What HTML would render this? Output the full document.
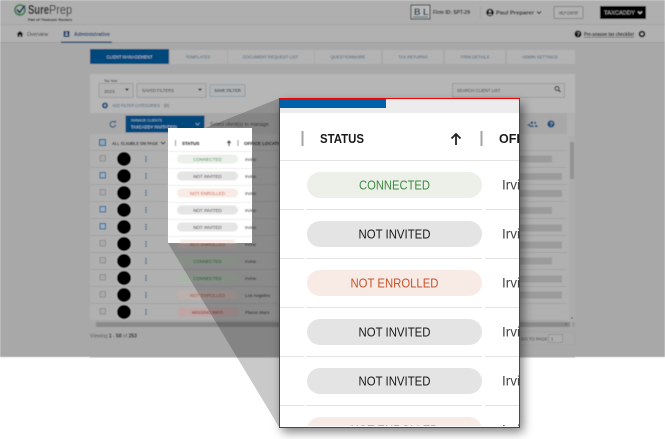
<!DOCTYPE html>
<html><head><meta charset="utf-8"><title>SurePrep</title>
<style>
html,body{margin:0;padding:0;background:#fff;width:665px;height:439px;overflow:hidden}
svg{display:block;font-family:"Liberation Sans",sans-serif}
</style></head><body>
<svg width="665" height="439" viewBox="0 0 665 439" xmlns="http://www.w3.org/2000/svg">
<defs>
<filter id="b" x="-2%" y="-2%" width="104%" height="104%"><feGaussianBlur stdDeviation="0.45"/></filter>
<filter id="s" x="-10%" y="-10%" width="125%" height="120%"><feGaussianBlur stdDeviation="5"/></filter>
<clipPath id="m"><rect x="280" y="99" width="239" height="327"/></clipPath>
</defs>
<rect width="665" height="439" fill="#fff"/>
<g filter="url(#b)">
<rect width="665" height="357" fill="#a8a8a8"/>
<rect width="665" height="24" fill="#afafaf"/>
<rect y="24" width="665" height="1" fill="#a2a2a2"/>
<rect y="25" width="665" height="17" fill="#b1b1b1"/>
<rect y="42" width="665" height="1" fill="#9c9c9c"/>
<!-- logo -->
<circle cx="20" cy="10" r="5" fill="none" stroke="#3d7a52" stroke-width="1.800"/>
<path d="M17 9.500l2.500 3L25 5.500" fill="none" stroke="#123f5a" stroke-width="1.800"/>
<text x="28" y="14" font-size="12.500" font-weight="700" fill="#111" textLength="21" lengthAdjust="spacingAndGlyphs">Sure</text>
<text x="49" y="14" font-size="12.500" fill="#333" textLength="23" lengthAdjust="spacingAndGlyphs">Prep</text>
<text x="28" y="21" font-size="4" font-weight="700" fill="#111" textLength="44" lengthAdjust="spacingAndGlyphs">Part of Thomson Reuters</text>
<!-- right header -->
<rect x="411" y="5" width="19" height="14" fill="#b9b9b9" stroke="#333"/>
<text x="414" y="15" font-size="9" font-weight="700" fill="#123f4f">B</text>
<text x="423" y="15" font-size="9" font-weight="700" fill="#123f4f">L</text>
<rect x="413" y="16.500" width="15" height="1" fill="#3a6a6a"/>
<text x="433" y="14" font-size="5.500" font-weight="700" fill="#222" textLength="37" lengthAdjust="spacingAndGlyphs">Firm ID: SPT-29</text>
<rect x="480" y="6" width="1" height="13" fill="#a4a4a4"/>
<circle cx="490" cy="12.500" r="3.800" fill="#111"/>
<circle cx="490" cy="11.300" r="1.300" fill="#aaa"/>
<path d="M487.800 15a2.300 2 0 0 1 4.400 0z" fill="#aaa"/>
<text x="496" y="14.500" font-size="5.500" font-weight="700" fill="#222" textLength="38" lengthAdjust="spacingAndGlyphs">Paul Preparer</text>
<path d="M537 11.500l2 2 2-2" fill="none" stroke="#222" stroke-width="1"/>
<rect x="554" y="6.500" width="29" height="12" rx="1" fill="#b1b1b1" stroke="#858585"/>
<text x="559" y="14.300" font-size="4.500" fill="#222" textLength="19" lengthAdjust="spacingAndGlyphs">HELP CENTER</text>
<rect x="600" y="6" width="46" height="13" fill="#000"/>
<text x="604" y="14.500" font-size="5" fill="#aaa" textLength="31" lengthAdjust="spacingAndGlyphs">TAXCADDY</text>
<path d="M638 11.500l2 2 2-2" fill="none" stroke="#ccc" stroke-width="1"/>
<!-- nav -->
<path d="M16.500 34l3.500-3 3.500 3h-1v3h-1.800v-2h-1.400v2h-1.800v-3z" fill="#111"/>
<text x="27" y="36" font-size="5.500" fill="#333" textLength="21" lengthAdjust="spacingAndGlyphs">Overview</text>
<rect x="63.500" y="31" width="6" height="6" rx=".8" fill="#15406a"/>
<circle cx="66.500" cy="33" r="1" fill="#b3b3b3"/>
<rect x="65" y="34.500" width="3" height="1" fill="#b3b3b3"/>
<text x="74" y="36" font-size="5.500" font-weight="700" fill="#15406a" textLength="36" lengthAdjust="spacingAndGlyphs">Administrative</text>
<rect x="61" y="41.500" width="51" height="1.500" fill="#1c4a72"/>
<circle cx="578" cy="34" r="3.500" fill="#111"/>
<text x="576.800" y="36" font-size="5" font-weight="700" fill="#aaa">?</text>
<text x="584" y="36" font-size="5" font-weight="700" fill="#222" text-decoration="underline" textLength="50" lengthAdjust="spacingAndGlyphs">Pre-season tax checklist</text>
<circle cx="642" cy="34" r="2.400" fill="none" stroke="#111" stroke-width="1.800"/>
<!-- tabs -->
<rect x="90" y="49" width="79" height="15" fill="#04467c"/>
<rect x="170" y="50" width="57" height="14" fill="#b3b3b3"/>
<rect x="228" y="50" width="86" height="14" fill="#b3b3b3"/>
<rect x="315" y="50" width="66" height="14" fill="#b3b3b3"/>
<rect x="383" y="50" width="60" height="14" fill="#b3b3b3"/>
<rect x="445" y="50" width="60" height="14" fill="#b3b3b3"/>
<rect x="507" y="50" width="68" height="14" fill="#b3b3b3"/>
<g font-size="4.200" text-anchor="middle" fill="#3f607c">
<text x="129.500" y="58.500" fill="#c5ced6">CLIENT MANAGEMENT</text>
<text x="198" y="58.500">TEMPLATES</text>
<text x="270.500" y="58.500">DOCUMENT REQUEST LIST</text>
<text x="348" y="58.500">QUESTIONNAIRE</text>
<text x="413" y="58.500">TAX RETURNS</text>
<text x="475" y="58.500">FIRM DETAILS</text>
<text x="540" y="58.500">ADMIN SETTINGS</text>
</g>
<!-- panel -->
<rect x="90" y="74" width="485" height="283" fill="#b0b0b0"/>
<rect x="90" y="74" width="485" height="39" fill="#b6b6b6"/>
<rect x="99" y="83.500" width="34" height="14" rx="1" fill="#b3b3b3" stroke="#9c9c9c"/>
<text x="104" y="82" font-size="3.500" fill="#222">Tax Year</text>
<text x="104" y="93" font-size="4.800" fill="#333">2023</text>
<path d="M125 88.500h4l-2 2.500z" fill="#222"/>
<rect x="137" y="83.500" width="69" height="14" rx="1" fill="#b3b3b3" stroke="#9c9c9c"/>
<text x="142" y="92" font-size="4.200" fill="#333">SAVED FILTERS</text>
<path d="M198 88.500h4l-2 2.500z" fill="#333"/>
<rect x="210" y="84.500" width="35" height="12" rx="1" fill="#b3b3b3" stroke="#8fa0ad"/>
<text x="227.500" y="92" font-size="4.200" font-weight="700" text-anchor="middle" fill="#25496a">SAVE FILTER</text>
<circle cx="105" cy="105.500" r="3" fill="#15487a"/>
<path d="M103.500 105.500h3M105 104v3" stroke="#b8b8b8" stroke-width=".8"/>
<text x="112" y="107" font-size="4.300" fill="#3f607c" textLength="48" lengthAdjust="spacingAndGlyphs">ADD FILTER CATEGORIES</text>
<text x="164" y="107" font-size="4.300" fill="#444">(0)</text>
<rect x="452.500" y="83.500" width="112" height="14" rx="1" fill="#b3b3b3" stroke="#9c9c9c"/>
<text x="457" y="92" font-size="4.200" fill="#333">SEARCH CLIENT LIST</text>
<circle cx="557" cy="88.500" r="2" fill="none" stroke="#222" stroke-width="1"/>
<path d="M558.500 90l2 2" stroke="#222" stroke-width="1.200"/>
<!-- toolbar -->
<rect x="90" y="113" width="477" height="21" fill="#a8a8a8"/>
<path d="M115 122.500a2.800 2.800 0 1 0 .6 2.200" fill="none" stroke="#164a78" stroke-width="1"/>
<path d="M113.500 122.500h2.500v-2.300z" fill="#164a78"/>
<rect x="125.500" y="115.500" width="79" height="17" fill="#04467c"/>
<text x="131" y="121.500" font-size="3.500" fill="#b8c6d2">MANAGE CLIENTS</text>
<text x="131" y="128.500" font-size="4.400" fill="#d0d8de" textLength="46" lengthAdjust="spacingAndGlyphs">TAXCADDY INVITATION</text>
<path d="M195.500 123l2 2 2-2" stroke="#8fa5b8" fill="none" stroke-width=".8"/>
<text x="210" y="126" font-size="5" fill="#333" textLength="60" lengthAdjust="spacingAndGlyphs">Select client(s) to manage.</text>
<path d="M527 125l3-1.500v3zM530.500 122.800a1.300 1.300 0 1 1 2.600 0 1.300 1.300 0 1 1-2.600 0M529.500 127c.8-2.400 4-2.400 4.800 0zM534 122.800a1.100 1.100 0 1 1 2.200 0 1.100 1.100 0 1 1-2.200 0M535 127h3c-.3-1.800-1.800-2.200-3-1.900z" fill="#144a78"/>
<circle cx="551" cy="124" r="3.600" fill="#144a78"/>
<text x="549.600" y="126" font-size="5.500" font-weight="700" fill="#b0b8bf">?</text>
<!-- table header -->
<rect x="99.500" y="139.500" width="6" height="6" fill="#8fa7ba" stroke="#235a88" stroke-width="1"/>
<text x="112" y="145" font-size="4.800" font-weight="700" fill="#222" textLength="46" lengthAdjust="spacingAndGlyphs">ALL ELIGIBLE ON PAGE</text>
<path d="M161 142l2 2 2-2" stroke="#222" fill="none" stroke-width=".9"/>
<!-- rows -->
<g stroke="#a2a2a2" stroke-width="1">
<path d="M90 150.500h477M90 167.500h477M90 184.500h477M90 201.500h477M90 218.500h477M90 235.500h477M90 252.500h477M90 269.500h477M90 286.500h477M90 303.500h477M90 320.500h477"/>
</g>
<g fill="#aaaaaa" stroke="#8e8e8e">
<rect x="100" y="155.500" width="5.500" height="5.500"/><rect x="100" y="189.500" width="5.500" height="5.500"/>
<rect x="100" y="240.500" width="5.500" height="5.500"/><rect x="100" y="257.500" width="5.500" height="5.500"/>
<rect x="100" y="274.500" width="5.500" height="5.500"/><rect x="100" y="291.500" width="5.500" height="5.500"/>
<rect x="100" y="308.500" width="5.500" height="5.500"/>
</g>
<g fill="#9cb0c0" stroke="#2d6594">
<rect x="100" y="172.500" width="5.500" height="5.500"/><rect x="100" y="206.500" width="5.500" height="5.500"/><rect x="100" y="223.500" width="5.500" height="5.500"/>
</g>
<g fill="#000" stroke="#c8c8c8" stroke-width=".8">
<circle cx="124" cy="159" r="7.500"/><circle cx="124" cy="176" r="7.500"/><circle cx="124" cy="193" r="7.500"/>
<circle cx="124" cy="210" r="7.500"/><circle cx="124" cy="227" r="7.500"/><circle cx="124" cy="244" r="7.500"/>
<circle cx="124" cy="261" r="7.500"/><circle cx="124" cy="278" r="7.500"/><circle cx="124" cy="295" r="7.500"/>
<circle cx="124" cy="312" r="7.500"/>
</g>
<g stroke="#1f5a8c" stroke-width="1.400" stroke-dasharray="1.300 .9">
<path d="M146 156v6M146 173v6M146 190v6M146 207v6M146 224v6M146 241v6M146 258v6M146 275v6M146 292v6M146 309v6"/>
</g>
<!-- dim pills -->
<rect x="177" y="239.500" width="61" height="9" rx="4.500" fill="#bcb0ac"/>
<text x="207.500" y="246" font-size="4.500" text-anchor="middle" fill="#9c4828">NOT ENROLLED</text>
<rect x="177" y="256.500" width="61" height="9" rx="4.500" fill="#aab5aa"/>
<text x="207.500" y="263" font-size="4.500" text-anchor="middle" fill="#2e6a30">CONNECTED</text>
<rect x="177" y="273.500" width="61" height="9" rx="4.500" fill="#aab5aa"/>
<text x="207.500" y="280" font-size="4.500" text-anchor="middle" fill="#2e6a30">CONNECTED</text>
<rect x="177" y="290.500" width="61" height="9" rx="4.500" fill="#bcb0ac"/>
<text x="207.500" y="297" font-size="4.500" text-anchor="middle" fill="#9c4828">NOT ENROLLED</text>
<rect x="177" y="307.500" width="61" height="9" rx="4.500" fill="#bfa5a5"/>
<text x="207.500" y="314" font-size="4.500" text-anchor="middle" fill="#7e2c2c">MISSING INFO</text>
<g font-size="4.600" fill="#222">
<text x="245" y="246">Irvine</text><text x="245" y="263">Irvine</text><text x="245" y="280">Irvine</text>
<text x="245" y="297">Los Angeles</text><text x="245" y="314">Planet Mars</text>
</g>
<!-- right blocks -->
<g fill="#9b9b9b">
<rect x="515" y="155.500" width="37" height="7"/><rect x="515" y="173" width="47" height="7"/><rect x="515" y="190" width="47" height="7"/>
<rect x="515" y="207" width="37" height="7"/><rect x="515" y="224.500" width="47" height="7"/><rect x="515" y="241.500" width="47" height="7"/>
<rect x="515" y="257.500" width="37" height="7"/><rect x="515" y="275.500" width="47" height="7"/><rect x="515" y="291.500" width="47" height="7"/>
</g>
<!-- scrollbars -->
<rect x="569" y="136" width="6" height="186" fill="#acacac"/>
<rect x="570" y="142" width="4" height="37" fill="#929292"/>
<circle cx="572" cy="318" r=".8" fill="#555"/>
<rect x="90" y="321.500" width="485" height="6" fill="#a8a8a8"/>
<rect x="96" y="322" width="474" height="5" fill="#8a8a8a"/>
<circle cx="566" cy="324" r=".8" fill="#555"/>
<rect x="572" y="322" width="3" height="5" fill="#9a9a9a"/>
<rect x="90" y="327.500" width="485" height="30" fill="#a8a8a8"/>
<text x="90" y="337.500" font-size="5" fill="#555">Viewing <tspan font-weight="700" fill="#111">1</tspan> - <tspan font-weight="700" fill="#111">50</tspan> of <tspan font-weight="700" fill="#111">253</tspan></text>
<rect x="520" y="332" width="55" height="13" fill="#a9a9a9" stroke="#a2a2a2"/>
<text x="521" y="340.500" font-size="4.300" fill="#333">GO TO PAGE</text>
<rect x="548.500" y="334.500" width="14" height="8" rx="1" fill="#adadad" stroke="#959595"/>
<text x="551" y="340.500" font-size="4.300" fill="#333">1</text>
</g>
<!-- wedge -->
<path d="M205 128L280 98V427H279L168 243V128z" fill="#000" fill-opacity=".21"/>
<!-- white source box -->
<rect x="168" y="128" width="84" height="115" fill="#fff"/>
<g filter="url(#b)">
<rect x="175" y="140" width="1" height="6" fill="#999"/>
<rect x="237.500" y="140" width="1" height="6" fill="#999"/>
<text x="182" y="145" font-size="4.500" font-weight="700" fill="#111">STATUS</text>
<path d="M229 146v-5M227.300 143l1.700-2 1.700 2" stroke="#222" fill="none" stroke-width=".8"/>
<text x="244" y="145" font-size="4.600" font-weight="700" fill="#222">OFFICE LOCATION</text>
<path d="M168 151.500h84M168 168.500h84M168 185.500h84M168 202.500h84M168 219.500h84M168 236.500h84" stroke="#e6e6e6" stroke-width=".8"/>
<rect x="177" y="154.500" width="61" height="9" rx="4.500" fill="#ecf0ea"/>
<text x="207.500" y="161" font-size="4.500" text-anchor="middle" fill="#3e8a40">CONNECTED</text>
<rect x="177" y="171.500" width="61" height="9" rx="4.500" fill="#e5e5e5"/>
<text x="207.500" y="178" font-size="4.500" text-anchor="middle" fill="#222">NOT INVITED</text>
<rect x="177" y="188.500" width="61" height="9" rx="4.500" fill="#f8ebe6"/>
<text x="207.500" y="195" font-size="4.500" text-anchor="middle" fill="#c8502a">NOT ENROLLED</text>
<rect x="177" y="205.500" width="61" height="9" rx="4.500" fill="#e5e5e5"/>
<text x="207.500" y="212" font-size="4.500" text-anchor="middle" fill="#222">NOT INVITED</text>
<rect x="177" y="222.500" width="61" height="9" rx="4.500" fill="#e5e5e5"/>
<text x="207.500" y="229" font-size="4.500" text-anchor="middle" fill="#222">NOT INVITED</text>
<path d="M181 239.500h53l1.500 3.500h-56z" fill="#f8ebe6"/>
<g font-size="4.600" fill="#333">
<text x="245" y="161">Irvine</text><text x="245" y="178">Irvine</text><text x="245" y="195">Irvine</text><text x="245" y="212">Irvine</text><text x="245" y="229">Irvine</text>
</g>
</g>
<!-- magnifier -->
<rect x="282" y="103" width="241" height="329" fill="#000" fill-opacity=".5" filter="url(#s)"/>
<rect x="279.500" y="98.500" width="240" height="329" fill="#fff"/>
<g clip-path="url(#m)">
<rect x="280" y="99" width="240" height="14" fill="#ececec"/>
<rect x="280" y="99" width="106" height="9" fill="#0060a8"/>
<rect x="301.500" y="131" width="2" height="15" fill="#a6a6a6"/>
<rect x="480.500" y="131" width="2" height="15" fill="#a6a6a6"/>
<text x="320" y="143" font-size="12.500" font-weight="700" fill="#1a1a1a" textLength="44" lengthAdjust="spacingAndGlyphs">STATUS</text>
<path d="M456 145V134M451.500 138.500L456 134l4.500 4.500" fill="none" stroke="#222" stroke-width="1.800"/>
<text x="499" y="143" font-size="12.500" font-weight="700" fill="#1a1a1a">OFFICE</text>
<path d="M280 160.500h240M280 209.500h24M306 209.500h176M485 209.500h35M280 258.500h24M306 258.500h176M485 258.500h35M280 307.500h24M306 307.500h176M485 307.500h35M280 356.500h24M306 356.500h176M485 356.500h35M280 405.500h24M306 405.500h176M485 405.500h35" stroke="#e2e2e2" stroke-width="1"/>
<rect x="307" y="172" width="175" height="26" rx="13" fill="#ecf0e9"/>
<rect x="307" y="221" width="175" height="26" rx="13" fill="#e4e4e4"/>
<rect x="307" y="270" width="175" height="26" rx="13" fill="#f8ebe6"/>
<rect x="307" y="319" width="175" height="26" rx="13" fill="#e4e4e4"/>
<rect x="307" y="368" width="175" height="26" rx="13" fill="#e4e4e4"/>
<rect x="307" y="417" width="175" height="26" rx="13" fill="#f8ebe6"/>
<g font-size="13">
<text x="359" y="189.500" fill="#3d8a42" textLength="71" lengthAdjust="spacingAndGlyphs">CONNECTED</text>
<text x="358.500" y="238.500" fill="#1a1a1a" textLength="72" lengthAdjust="spacingAndGlyphs">NOT INVITED</text>
<text x="350.500" y="287.500" fill="#c8532a" textLength="88" lengthAdjust="spacingAndGlyphs">NOT ENROLLED</text>
<text x="358.500" y="336.500" fill="#1a1a1a" textLength="72" lengthAdjust="spacingAndGlyphs">NOT INVITED</text>
<text x="358.500" y="385.500" fill="#1a1a1a" textLength="72" lengthAdjust="spacingAndGlyphs">NOT INVITED</text>
<text x="350.500" y="434.500" fill="#c8532a" textLength="88" lengthAdjust="spacingAndGlyphs">NOT ENROLLED</text>
</g>
<g font-size="13.500" fill="#444">
<text x="502" y="189.500">Irvine</text><text x="502" y="238.500">Irvine</text><text x="502" y="287.500">Irvine</text>
<text x="502" y="336.500">Irvine</text><text x="502" y="385.500">Irvine</text><text x="502" y="434.500">Irvine</text>
</g>
</g>
<rect x="279.500" y="98.500" width="240" height="329" fill="none" stroke="#f00000" stroke-width="1"/>
</svg>
</body></html>
